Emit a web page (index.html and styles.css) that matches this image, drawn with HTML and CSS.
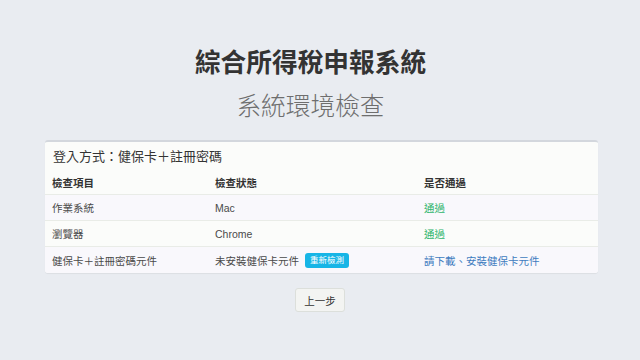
FILE: index.html
```html
<!DOCTYPE html>
<html lang="zh-Hant">
<head>
<meta charset="utf-8">
<title>系統環境檢查</title>
<link rel="stylesheet" href="styles.css">
</head>
<body>
<div class="page">
  <h1 class="title">綜合所得稅申報系統</h1>
  <h2 class="subtitle">系統環境檢查</h2>
  <div class="card">
    <div class="card-header">登入方式：健保卡＋註冊密碼</div>
    <div class="table">
      <div class="row head">
        <div class="c1">檢查項目</div>
        <div class="c2">檢查狀態</div>
        <div class="c3">是否通過</div>
      </div>
      <div class="row odd">
        <div class="c1">作業系統</div>
        <div class="c2">Mac</div>
        <div class="c3 ok">通過</div>
      </div>
      <div class="row even">
        <div class="c1">瀏覽器</div>
        <div class="c2">Chrome</div>
        <div class="c3 ok">通過</div>
      </div>
      <div class="row odd last">
        <div class="c1">健保卡＋註冊密碼元件</div>
        <div class="c2">未安裝健保卡元件 <span class="badge">重新檢測</span></div>
        <div class="c3 link">請下載、安裝健保卡元件</div>
      </div>
    </div>
  </div>
  <div class="actions">
    <button class="btn">上一步</button>
  </div>
</div>
</body>
</html>
```

FILE: styles.css
```css
html, body {
  margin: 0;
  padding: 0;
  background: #e9ecf1;
  font-family: "Liberation Sans", "Noto Sans CJK TC", sans-serif;
  color: #333;
}
.page {
  width: 640px;
  height: 360px;
  padding-top: 48px;
  box-sizing: border-box;
}
.title {
  margin: 0;
  padding-right: 19px;
  text-align: center;
  font-size: 25.7px;
  line-height: 30px;
  font-weight: 700;
  color: #333;
}
.subtitle {
  margin: 11px 0 0;
  padding-right: 19px;
  text-align: center;
  font-family: "Noto Sans CJK TC", sans-serif;
  font-size: 24.7px;
  line-height: 30px;
  font-weight: 200;
  color: #6e6e6e;
}
.card {
  margin: 21px 42px 0 45px;
  border-top: 2px solid #d3d7dd;
  border-radius: 3px;
  background: #fbfcfa;
  box-shadow: 0 1px 1px rgba(0,0,0,0.06);
  overflow: hidden;
}
.card-header {
  height: 27px;
  line-height: 29px;
  padding-left: 8px;
  font-size: 13px;
  color: #333;
}
.row {
  display: flex;
  height: 25px;
  align-items: center;
  font-size: 10.5px;
  color: #4a4a4a;
  border-bottom: 1px solid #e9ece7;
}
.row.head { padding-top: 2px; height: 23px; }
.row.last { border-bottom: none; height: 26px; }
.row.head { font-weight: 700; color: #333; }
.row.odd { background: #f9f8fc; }
.row.even { background: #fbfcfa; }
.c1 { width: 163px; padding-left: 7px; }
.c2 { width: 209px; display: flex; align-items: center; }
.c3 { flex: 1; }
.ok { color: #2fb56d; }
.link { color: #3f7cbf; }
.badge {
  display: inline-block;
  margin-left: 6px;
  padding: 0 5px;
  height: 15px;
  line-height: 15px;
  font-size: 8.5px;
  color: #fff;
  background: #17b5e6;
  border-radius: 3px;
}
.actions {
  display: flex;
  justify-content: center;
  margin-top: 15px;
}
.btn {
  width: 50px;
  height: 24px;
  padding: 0;
  font-family: "Liberation Sans", "Noto Sans CJK TC", sans-serif;
  font-size: 10.5px;
  color: #333;
  background: #f3f4f2;
  border: 1px solid #dcdfdb;
  border-radius: 3px;
}
```
